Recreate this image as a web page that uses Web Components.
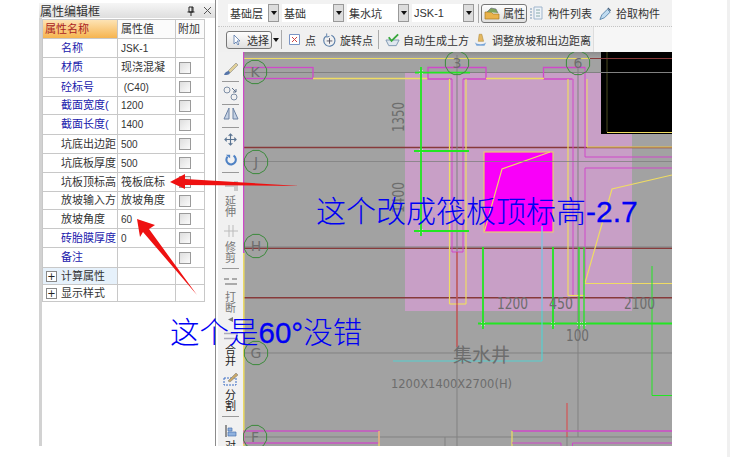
<!DOCTYPE html>
<html><head><meta charset="utf-8"><style>
html,body{margin:0;padding:0;background:#fff;width:730px;height:457px;overflow:hidden}
body{font-family:"Liberation Sans","Noto Sans CJK SC",sans-serif;position:relative}
</style></head><body>
<app-window></app-window>
<script>
const CJK='"Liberation Sans","Noto Sans CJK SC",sans-serif';
class PropPanel extends HTMLElement{
 constructor(){super();const rows=[
 ['名称','JSK-1',0,1],['材质','现浇混凝',1,1],['砼标号','&nbsp;(C40)',1,1],['截面宽度(','1200',1,1],['截面长度(','1400',1,1],
 ['坑底出边距','500',1,0],['坑底板厚度','500',1,0],['坑板顶标高','筏板底标',1,0],['放坡输入方','放坡角度',1,0],['放坡角度','60',1,0],['砖胎膜厚度','0',1,1],['备注','',1,1]];
 const hs=[19,20,19,18,20,19,19,19,18,19,19,20];
 let h='';rows.forEach((r,i)=>{const big=/[\u4e00-\u9fff]/.test(r[1]);h+=`<div class="r" style="height:${hs[i]}px"><div class="n ${r[3]?'b':''}">${r[0]}</div><div class="v" style="font-size:${big?11:10}px">${r[1]}</div><div class="c">${r[2]?'<i></i>':''}</div></div>`});
 this.attachShadow({mode:'open'}).innerHTML=`<style>
 :host{display:flex;flex-direction:column;width:177px;height:446px;margin-left:39px;box-sizing:border-box;background:#fff;font:11px ${CJK};color:#333;flex:none;border-right:1px solid #8c8c8c}
 .t{height:15px;margin-top:3px;display:flex;align-items:center;background:linear-gradient(#f6f6f6,#dedede);padding:0 3px 0 1px;font-size:12px;color:#333;flex:none}
 .t span{flex:1}.t svg{margin-left:8px}
 .w{flex:1;border-left:3px solid #d2d2d2;padding-top:1px}
 .tb{border-left:1px solid #c8c8c8;border-top:1px solid #c8c8c8;width:162px}
 .r{display:grid;grid-template-columns:75px 58px 29px;box-sizing:border-box;border-bottom:1px solid #c8c8c8;width:162px;background:#fff;line-height:17px}
 .r>div{border-right:1px solid #c8c8c8;white-space:nowrap;overflow:hidden;display:flex;align-items:center}
 .hd{height:19px;background:#fbfbfb}.hd .n{background:linear-gradient(#fde3b4,#f6b44f);color:#a22;padding-left:2px}.hd .v{padding-left:3px}.hd .c{padding-left:2px}
 .n{padding-left:18px}.b{color:#2020ac}.v{padding-left:3px}
 .c{padding-left:3px}.c i{display:block;width:10px;height:10px;border:1px solid #9a9a9a;background:linear-gradient(135deg,#dedede,#fbfbfb)}
 .ex .n{padding-left:3px;gap:4px}.ex b{display:flex;align-items:center;justify-content:center;width:9px;height:9px;border:1px solid #888;font:400 10px/9px "DejaVu Sans";background:#fff;color:#222}
 </style>
 <div class="t"><span>属性编辑框</span><svg width="8" height="10" viewBox="0 0 8 10"><path d="M2 1h4v5H2zM0.5 6h7M4 6v4M5 1v5" fill="none" stroke="#222"/></svg><svg width="9" height="9" viewBox="0 0 9 9"><path d="M1 1l7 7M8 1l-7 7" stroke="#555" fill="none"/></svg></div>
 <div class="w"><div class="tb"><div class="r hd"><div class="n">属性名称</div><div class="v" style="font-size:11px">属性值</div><div class="c">附加</div></div>${h}
 <div class="r ex" style="height:17px"><div class="n" style="background:#e6f1fb"><b>+</b>计算属性</div><div></div><div></div></div>
 <div class="r ex" style="height:17px"><div class="n"><b>+</b>显示样式</div><div></div><div></div></div></div></div>`;}
}
class TopBars extends HTMLElement{
 constructor(){super();const sel=(t,w,m)=>`<div class="s" style="width:${w}px;margin-left:${m}px"><span>${t}</span><b></b></div>`;
 this.attachShadow({mode:'open'}).innerHTML=`<style>
 :host{display:block;height:52px;background:#f6f6f6;font:11px ${CJK};color:#333;flex:none}
 .a{height:27px;display:flex;align-items:center;padding-left:10px;border-bottom:1px dotted #c4c4c4;box-sizing:border-box;background:#f2f2f2}
 .b2{height:25px;display:flex;align-items:center;padding-left:8px;width:376px;box-sizing:border-box;background:#f0f0f0;border-right:1px solid #ddd}
 .s{height:18px;display:flex;align-items:center;background:#fff;box-sizing:border-box;padding-left:2px;justify-content:space-between;font-size:11px}
 .s b{display:flex;width:11px;height:18px;background:#ddd;border:1px solid #999;box-sizing:border-box;align-items:center;justify-content:center}
 .s b:after{content:"";border:3px solid transparent;border-top:4px solid #111;margin-top:3px}
 .sep{width:1px;height:19px;background:#aaa;flex:none}
 .i{white-space:nowrap}
 .btn{border:1px solid #777;border-radius:3px;background:linear-gradient(#fdfdfd,#e0e0e0);height:19px;display:flex;align-items:center;box-sizing:border-box;width:46px;flex:none}
 svg{flex:none}
 </style>
 <div class="a">${sel('基础层',51,0)}${sel('基础',62,3)}${sel('集水坑',62,3)}${sel('JSK-1',62,3)}<div class="sep" style="margin-left:4px"></div>
  <div class="i btn" style="margin-left:2px;padding-left:2px"><svg width="16" height="14" viewBox="0 0 16 14"><path d="M1 6h6l2 2h6v5H1z" fill="#e9b24a" stroke="#a67a22" stroke-width=".7"/><path d="M3 6l4-4 5 1 2 4" fill="#7fa35a" stroke="#557" stroke-width=".5"/></svg><span style="margin-left:3px">属性</span></div>
  <svg width="13" height="14" viewBox="0 0 13 14" style="margin-left:3px"><path d="M0 3h2M0 6h2M0 9h2M0 12h2" stroke="#7796b6"/><path d="M4 1h8v12H4z" fill="#eef3f8" stroke="#9fb5cc"/><path d="M6 4h4M6 7h4M6 10h4" stroke="#8aa"/></svg><span class="i" style="margin-left:5px">构件列表</span>
  <svg width="13" height="15" viewBox="0 0 14 15" style="margin-left:7px"><path d="M1 14l2-5 6-6 3 3-6 6z" fill="#bfdbf0" stroke="#5a86ad"/><path d="M9 2l1-1 3 3-1 1z" fill="#46617f"/></svg><span class="i" style="margin-left:4px">拾取构件</span></div>
 <div class="b2"><div class="i btn" style="padding-left:6px;height:18px"><svg width="8" height="12" viewBox="0 0 8 12"><path d="M1 1v9l2-2 2 3 1-1-2-3h3z" fill="#fff" stroke="#5577aa" stroke-width=".8"/></svg><span style="margin-left:6px">选择</span></div>
  <svg width="6" height="4" style="margin-left:1px" viewBox="0 0 6 4"><path d="M0 0h6L3 4z" fill="#111"/></svg><div class="sep" style="margin-left:2px"></div>
  <svg width="11" height="11" viewBox="0 0 11 11" style="margin-left:7px"><path d="M.5.5h10v10H.5z" fill="#fff" stroke="#7a94c4"/><path d="M3 3l5 5M8 3L3 8" stroke="#c44"/></svg><span class="i" style="margin-left:5px">点</span>
  <svg width="15" height="16" viewBox="0 0 16 16" style="margin-left:6px"><path d="M4 4a6 6 0 1 0 6-1" fill="none" stroke="#5a7ea8" stroke-width="1.2"/><path d="M5 1l0 4 3-1" fill="none" stroke="#5a7ea8"/><path d="M8 6v6M5 9h6" stroke="#556"/></svg><span class="i" style="margin-left:3px">旋转点</span><div class="sep" style="margin-left:5px"></div>
  <svg width="15" height="14" viewBox="0 0 16 14" style="margin-left:6px"><path d="M1 7l3 6h8l3-6z" fill="#dfe7ef" stroke="#7d95b0"/><path d="M4 4l3 4 7-7" fill="none" stroke="#38a83c" stroke-width="2"/></svg><span class="i" style="margin-left:3px">自动生成土方</span>
  <svg width="15" height="16" viewBox="0 0 17 17" style="margin-left:4px"><path d="M2 11c2 3 11 3 13 0l-2 4H4z" fill="#7aa6d8"/><path d="M7 2l3 0 2 8-6 0z" fill="#e4b860" stroke="#a98334" stroke-width=".6"/></svg><span class="i" style="margin-left:4px">调整放坡和出边距离</span></div>`;}
}
class SideTools extends HTMLElement{
 constructor(){super();this.attachShadow({mode:'open'}).innerHTML=`<style>
 :host{display:flex;flex-direction:column;align-items:center;width:25px;background:#f1f1f1;font:11px/11px ${CJK};color:#777;flex:none;box-sizing:border-box;height:394px;overflow:hidden;padding-top:10px}
 hr{width:17px;height:1px;border:0;background:#999;margin:0;flex:none}
 svg{display:block;flex:none}
 .t{width:12px;text-align:center;flex:none}.d{color:#222}
 </style>
 <svg width="16" height="14" viewBox="0 0 16 14"><path d="M5 9l8-8 2 2-8 8z" fill="#e0cf98" stroke="#888" stroke-width=".6"/><path d="M1 13c1-3 3-4 5-4l1 2c-1 2-3 2-6 2z" fill="#5574a8"/></svg><hr style="margin-top:5px">
 <svg width="16" height="15" viewBox="0 0 16 15" style="margin-top:4px"><circle cx="4" cy="4" r="3" fill="none" stroke="#7d8ea5"/><circle cx="11" cy="11" r="3" fill="none" stroke="#7d8ea5"/><path d="M9 2l4 4M13 3v3h-3" fill="none" stroke="#5a6e8a"/></svg>
 <hr style="margin-top:3px"><svg width="16" height="13" viewBox="0 0 16 13" style="margin-top:2px"><path d="M1 12L6 1v11zM15 12L10 1v11z" fill="#c5d2e4" stroke="#6c83a4"/></svg><hr style="margin-top:7px">
 <svg width="13" height="13" viewBox="0 0 14 14" style="margin-top:5px"><path d="M7 1v12M1 7h12M5 3l2-2 2 2M5 11l2 2 2-2M3 5L1 7l2 2M11 5l2 2-2 2" fill="none" stroke="#5a7492" stroke-width="1.2"/></svg>
 <svg width="12" height="12" viewBox="0 0 14 14" style="margin-top:8px"><path d="M3 3a5.5 5.5 0 1 0 7-1" fill="none" stroke="#4f82c4" stroke-width="2.4"/><path d="M1 1h5v4z" fill="#4f82c4"/></svg><hr style="margin-top:6px">
 <svg width="16" height="12" viewBox="0 0 16 12" style="margin-top:7px"><path d="M2 6h9M12 1v10M14 1v10" stroke="#bbb" stroke-width="1.5"/></svg>
 <div class="t" style="margin-top:4px">延伸</div>
 <svg width="16" height="12" viewBox="0 0 16 12" style="margin-top:7px"><path d="M1 6h14M6 0v12M10 0v12" stroke="#bbb"/></svg>
 <div class="t" style="margin-top:5px">修剪</div><hr style="margin-top:4px">
 <svg width="16" height="10" viewBox="0 0 16 10" style="margin-top:8px"><path d="M1 2h5M9 2h5M2 7h12" stroke="#aaa" stroke-width="2"/></svg>
 <div class="t" style="margin-top:5px">打断</div>
 <svg width="6" height="5" viewBox="0 0 6 5" style="margin-top:3px"><path d="M0 2.5L5 0v5z" fill="#777"/></svg>
 <svg width="16" height="8" viewBox="0 0 16 8" style="margin-top:10px"><path d="M1 1.5h14M1 6.5h14" stroke="#aab" stroke-width="1.5"/></svg>
 <div class="t d" style="margin-top:5px">合并</div>
 <svg width="16" height="13" viewBox="0 0 16 13" style="margin-top:6px"><path d="M1 5h12v7H1z" fill="none" stroke="#3a6cc4" stroke-dasharray="2 1"/><path d="M5 8l8-8 2 2-8 7z" fill="#c8a86a" stroke="#777" stroke-width=".5"/></svg>
 <div class="t d" style="margin-top:4px">分割</div><hr style="margin-top:4px">
 <svg width="14" height="12" viewBox="0 0 14 12" style="margin-top:8px"><path d="M2 0v12" stroke="#333"/><path d="M4 3h4v3H4zM4 7h8v4H4z" fill="#8fb1de" stroke="#4a73b0" stroke-width=".7"/></svg>
 <div class="t d" style="margin-top:4px">对</div>`;}
}
class CadCanvas extends HTMLElement{
 constructor(){super();const P='#cf49c9',Y='#efdc63',G='#22e622',R='#873a3a',L='#818181',T='#6d6d6d';
 const circ=(x,y,t)=>`<polygon points="${Array.from({length:12},(_,i)=>{const a=i*Math.PI/6+Math.PI/12;return (x+12*Math.cos(a)).toFixed(1)+','+(y+12*Math.sin(a)).toFixed(1)}).join(' ')}" fill="none" stroke="#3c8a3c"/><text x="${x}" y="${y+5}" text-anchor="middle" font-size="14" fill="#6e6e6e">${t}</text>`;
 const rect=(x,y,w,h,c,sw=1.3)=>`<rect x="${x}" y="${y}" width="${w}" height="${h}" fill="none" stroke="${c}" stroke-width="${sw}"/>`;
 const line=(a,b,c,d,col,sw=1,ex='')=>`<line x1="${a}" y1="${b}" x2="${c}" y2="${d}" stroke="${col}" stroke-width="${sw}" ${ex}/>`;
 const num=(x,y,t,w,fs=15)=>`<text x="${x}" y="${y}" font-size="${fs}" fill="${T}" textLength="${w}" lengthAdjust="spacingAndGlyphs">${t}</text>`;
 const vnum=(x,y,t,w)=>`<text transform="translate(${x},${y}) rotate(-90)" font-size="15" fill="${T}" textLength="${w}" lengthAdjust="spacingAndGlyphs">${t}</text>`;
 const tick=(x,y)=>`<path d="M${x-2} ${y-2}l1 1M${x+2} ${y-2}l-1 1M${x-2} ${y+2}l1 -1M${x+2} ${y+2}l-1 -1" stroke="#e8e8e8" stroke-width=".7" fill="none"/>`;
 this.attachShadow({mode:'open'}).innerHTML=`<style>
 :host{display:block;flex:1;height:394px;background:#a2a2a2;overflow:hidden}svg{display:block}
 text{font-family:"DejaVu Sans",sans-serif}</style>
 <svg width="429" height="394" viewBox="243 52 429 394" xmlns="http://www.w3.org/2000/svg">
 <defs><linearGradient id="tg" x1="0" y1="0" x2="0" y2="1"><stop offset="0" stop-color="#8c8c8c"/><stop offset="1" stop-color="#a2a2a2"/></linearGradient></defs>
 <rect x="243" y="52" width="429" height="394" fill="#a2a2a2"/><rect x="243" y="52" width="429" height="6" fill="url(#tg)"/>
 <rect x="405" y="72" width="196" height="239" fill="#c89fc6"/><rect x="601" y="134" width="31" height="177" fill="#c89fc6"/>
 <rect x="601" y="52" width="71" height="82" fill="#000"/>
 ${line(607,132.5,672,132.5,Y)}${line(607,52,607,132,'#4a4a20')}
 ${line(243,58.5,601,58.5,Y)}${line(590,58.5,672,58.5,R)}
 ${line(243,72.5,672,72.5,L)}
 ${line(243,147.5,672,147.5,R,1.5)}${line(243,248.3,672,248.3,R,1.5)}${line(243,297.8,672,297.8,R,1.5)}
 ${line(243,247,672,247,L)}${line(243,353,672,353,L)}${line(243,437,672,437,L)}
 ${line(457,55,457,446,L)}${line(578,60,578,437,L)}${line(567,437,567,446,L)}${line(445,437,445,446,L)}
 ${rect(244,67.5,69,11,P)}${line(313,78.5,428,78.5,Y,1.5)}
 <path d="M452 79H428V67.5H486V79H463" fill="none" stroke="${P}" stroke-width="1.3"/>
 <path d="M572.5 79H543.5V67.5H585" fill="none" stroke="${P}" stroke-width="1.3"/>
 ${line(486,78.5,544,78.5,Y,1.5)}
 ${line(449.5,79,449.5,304,Y,1.2)}${line(466,79,466,304,Y,1.2)}${line(449.5,304,466,304,Y,1.2)}
 ${line(452,79,452,252,P)}${line(463,79,463,252,P)}${line(452,252,463,252,P)}
 ${line(568,79,568,295.5,Y,1.2)}${line(568,295.5,585,295.5,Y,1.2)}${line(573,79,573,295,P)}
 ${line(585,67,585,157,P)}${line(585,157,672,157,P)}${line(585,168,672,168,P)}${line(585,168,585,283,P)}
 ${line(587,79,587,147,Y)}${line(587,147,672,147,Y)}
 <polyline points="585,283 612,189 672,175" fill="none" stroke="${Y}" stroke-width="1.2"/>${line(585,283.5,672,283.5,Y)}
 ${line(243.5,52,243.5,253,P,1.5)}${line(243.8,253,243.8,446,Y,1.5)}
 <rect x="484" y="152" width="69" height="80" fill="#f900f9" stroke="#e9c772" stroke-width="1.2"/>
 <polyline points="484.5,231 502,169 550,152" fill="none" stroke="${Y}" stroke-width="1.1"/>
 ${line(243,161.5,672,161.5,L,1,'opacity=".8"')}
 ${line(421,67,421,236,G,1.8)}${line(415,72.7,470,72.7,G,1.8)}${line(414,151,469,151,G,1.8)}${line(414,231,469,231,G,1.8)}
 ${line(483,247,483,329,G,1.8)}${line(553,247,553,329,G,1.8)}${line(579,247,579,329,G,1.3)}${line(584,247,584,329,G,1.3)}
 ${line(478,323.5,672,323.5,G,2)}${line(652,266,652,395.5,G,1)}${line(652,395.5,672,395.5,G,1)}
 ${tick(483,324)}${tick(553,324)}${tick(579,324)}${tick(584,324)}${tick(421,72)}${tick(421,151)}${tick(421,231)}
 ${line(457,252,457,347,'#d24a4a',1.2)}${line(542,226,542,311,'#84bfdc',1.5)}${line(542,311,542,361,'#55d0d0',1.2)}${line(393,361,542,361,'#55d0d0',1.2)}
 ${line(567,403,567,437,'#d44',1)}
 ${vnum(404,132,'1350',30)}${vnum(404,213,'1400',31)}
 ${num(497,309,'1200',31)}${num(549,309,'450',24)}${num(624,309,'2100',31)}${num(566,341,'100',23)}
 <text x="453" y="362" font-size="19" fill="${T}" style="font-family:'Noto Sans CJK SC',sans-serif">集水井</text>
 ${num(391,388,'1200X1400X2700(H)',121,13)}
 ${rect(244,431,135,12,P)}${line(379,431,379,446,Y,1.2)}
 ${line(512,431,672,431,P,1.3)}${line(512,431,512,446,Y,1.2)}
 <path d="M512 443H561V446M672 443H572.5V446" fill="none" stroke="${P}"/>
 ${circ(255,72,'K')}${circ(457,63,'3')}${circ(578,63,'6')}${circ(256,162,'J')}${circ(256,246,'H')}${circ(256,353,'G')}${circ(255,437,'F')}
 </svg>`;}
}
class AppWindow extends HTMLElement{
 constructor(){super();this.attachShadow({mode:'open'}).innerHTML=`<style>
 :host{display:block;width:730px;height:457px;position:relative;background:#fff;overflow:hidden}
 .m{display:flex;height:446px;width:672px}
 .rt{display:flex;flex-direction:column;flex:1;margin-left:2px;min-width:0}
 .b{display:flex;flex:1}
 .g{position:absolute;left:727px;top:0;width:3px;height:457px;background:#f0f0f0}
 .ov{position:absolute;left:0;top:0;pointer-events:none}
 .n{position:absolute;color:#0000f4;font-family:"Liberation Sans","Noto Sans CJK SC",sans-serif;white-space:nowrap;font-weight:300}
 .n b{font-weight:400;-webkit-text-stroke:.3px #0000f4}
 </style>
 <div class="m"><prop-panel></prop-panel><div class="rt"><top-bars></top-bars><div class="b"><side-tools></side-tools><cad-canvas></cad-canvas></div></div></div>
 <div class="g"></div>
 <svg class="ov" width="730" height="457"><polygon points="170,182 185,174 185,179 300,186 185,185 185,189" fill="#ee1111"/><polygon points="137,219 155,225 149,229 197,295 143,232 140,237" fill="#ee1111"/></svg>
 <div class="n" style="left:316px;top:193px;font-size:30px;line-height:38px">这个改成筏板顶标高<b>-2.7</b></div>
 <div class="n" style="left:170px;top:314px;font-size:29.5px;line-height:38px">这个是<b>60°</b>没错</div>`;}
}
customElements.define('prop-panel',PropPanel);customElements.define('top-bars',TopBars);customElements.define('side-tools',SideTools);customElements.define('cad-canvas',CadCanvas);customElements.define('app-window',AppWindow);
</script></body></html>
